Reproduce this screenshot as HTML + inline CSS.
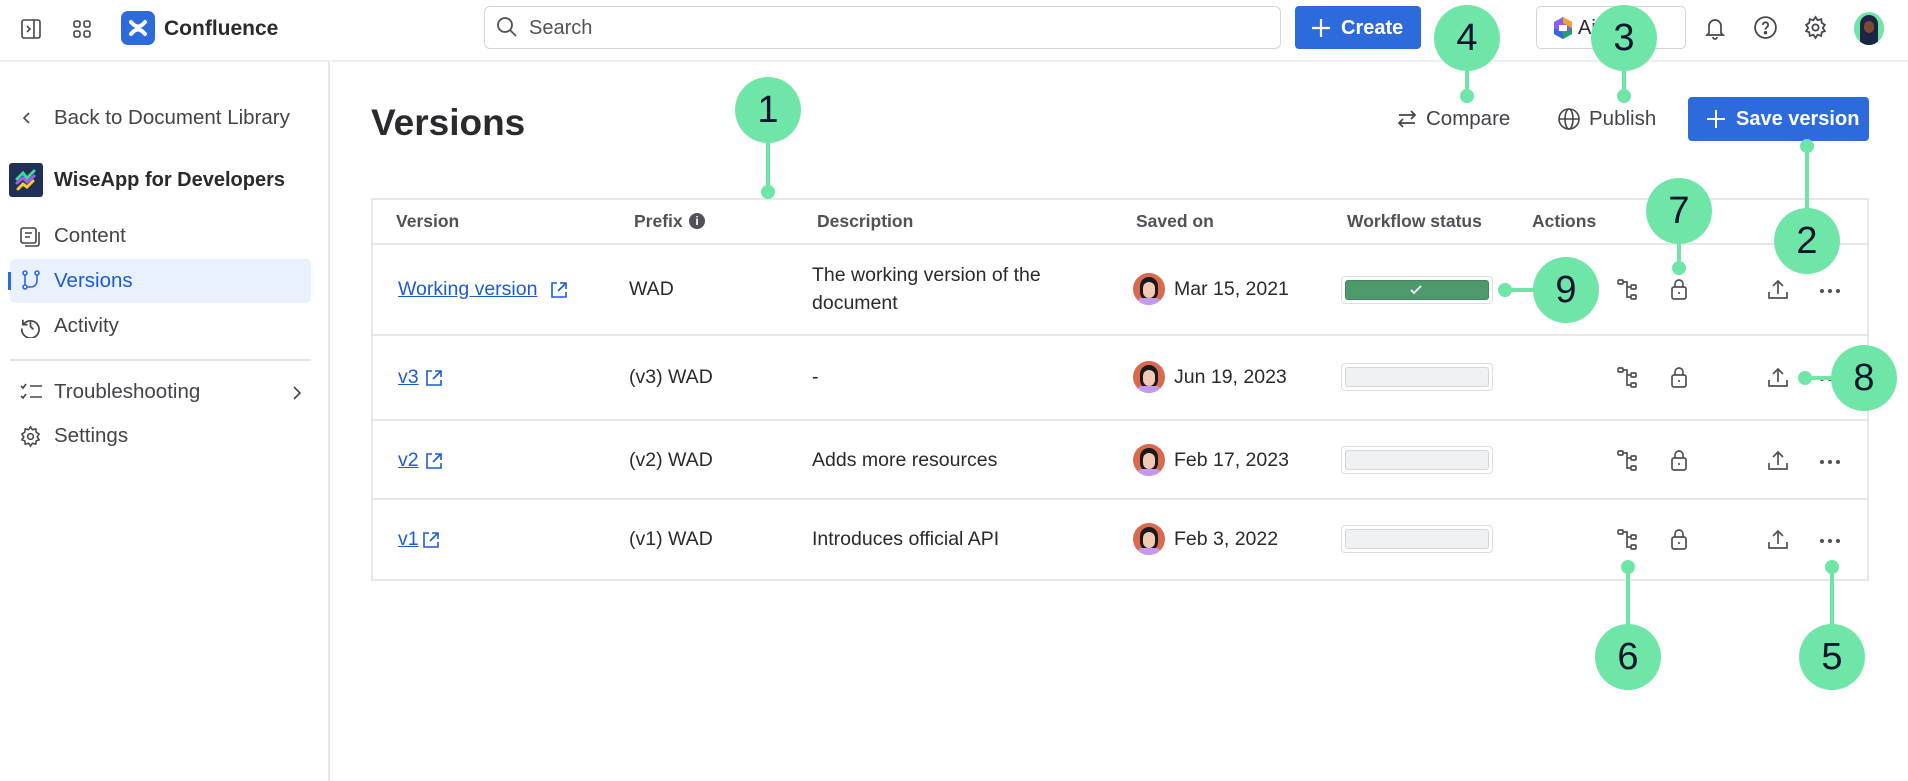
<!DOCTYPE html>
<html><head><meta charset="utf-8">
<style>
*{box-sizing:border-box;margin:0;padding:0}
body{width:1908px;height:781px;overflow:hidden;background:#fff;font-family:"Liberation Sans",sans-serif;color:#292A2E;position:relative}
.a{position:absolute}
.t{position:absolute;white-space:nowrap;line-height:1}
.nav{font-size:20.5px;color:#42444a}
.hd{font-size:17.5px;font-weight:bold;color:#505258}
.cell{font-size:19.5px;color:#292A2E}
.lnk{color:#1D5BD6;text-decoration:underline}
.bar{position:absolute;left:1341px;width:152px;height:28px;border:1px solid #dcdde0;border-radius:4px;padding:3px}
.bar div{width:100%;height:100%;background:#f0f1f2;border:1px solid #d5d6d9;border-radius:3px}
.row{position:absolute;left:371px;width:1498px;border-top:2px solid #e6e7e9}
.circ{position:absolute;width:66px;height:66px;border-radius:50%;background:#6fe6a8;color:#0a1630;font-size:38px;text-align:center;line-height:66px}
.dot{position:absolute;width:14px;height:14px;border-radius:50%;background:#6fe6a8}
.ln{position:absolute;background:#6fe6a8}
.av{position:absolute;width:32px;height:32px;border-radius:50%;background:#d9694f;overflow:hidden}
svg{position:absolute}
</style></head><body>
<div class="a" style="left:0;top:60px;width:1908px;height:2px;background:#eceef0"></div>
<svg style="left:19px;top:17px" width="24" height="24" viewBox="0 0 24 24" fill="none" stroke="#44464c" stroke-width="1.6"><rect x="3" y="3" width="18" height="18" rx="2"/><path d="M15 3v18M8 9l3 3-3 3"/></svg>
<svg style="left:70px;top:17px" width="24" height="24" viewBox="0 0 24 24" fill="none" stroke="#44464c" stroke-width="1.6"><rect x="4" y="4" width="6" height="6" rx="2"/><rect x="14" y="4" width="6" height="6" rx="2"/><rect x="4" y="14" width="6" height="6" rx="2"/><rect x="14" y="14" width="6" height="6" rx="2"/></svg>
<div class="a" style="left:121px;top:11px;width:34px;height:34px;border-radius:7px;background:#2d6bdc"></div>
<svg style="left:126px;top:16px" width="24" height="24" viewBox="0 0 24 24" fill="none" stroke="#fff" stroke-width="4" stroke-linecap="round"><path d="M5 6c5 6 9 6 14 0M5 18c5-6 9-6 14 0"/></svg>
<div class="t" style="left:164px;top:18px;font-size:21px;font-weight:bold;color:#292A2E">Confluence</div>
<div class="a" style="left:484px;top:6px;width:797px;height:43px;border:1.5px solid #d3d5d9;border-radius:6px"></div>
<svg style="left:496px;top:16px" width="22" height="22" viewBox="0 0 22 22" fill="none" stroke="#505258" stroke-width="1.8"><circle cx="9" cy="9" r="7"/><path d="M14 14l6 6"/></svg>
<div class="t" style="left:529px;top:18px;font-size:20px;color:#505258">Search</div>
<div class="a" style="left:1295px;top:6px;width:126px;height:43px;background:#2d6bdc;border-radius:4px"></div>
<svg style="left:1310px;top:17px" width="22" height="22" viewBox="0 0 22 22" stroke="#fff" stroke-width="2.2"><path d="M11 2v18M2 11h18"/></svg>
<div class="t" style="left:1341px;top:18px;font-size:20px;font-weight:bold;color:#fff">Create</div>
<div class="a" style="left:1536px;top:6px;width:150px;height:43px;border:1.5px solid #d3d5d9;border-radius:5px"></div>
<svg style="left:1553px;top:16px" width="20" height="24" viewBox="0 0 20 24"><path d="M10 1L19 6v12L10 23 1 18V6z" fill="#8b5cf6"/><path d="M10 1L19 6v6L10 7z" fill="#f5a524"/><path d="M1 12v6l9 5v-6z" fill="#2d6bdc"/><path d="M19 12v6l-9 5v-6z" fill="#22a06b"/><path d="M6 9h8v6H6z" fill="#fff"/></svg>
<div class="t" style="left:1578px;top:18px;font-size:20px;color:#292A2E">Ai&nbsp;&nbsp;&nbsp;&nbsp;&nbsp;&nbsp;&nbsp;vo</div>
<svg style="left:1703px;top:15px" width="24" height="26" viewBox="0 0 24 26" fill="none" stroke="#44464c" stroke-width="1.7"><path d="M6 18V11a6 6 0 0112 0v7l2 2H4zM10 22a2 2 0 004 0"/></svg>
<svg style="left:1753px;top:15px" width="25" height="25" viewBox="0 0 24 24" fill="none" stroke="#44464c" stroke-width="1.7"><circle cx="12" cy="12" r="10"/><path d="M9.5 9.5a2.5 2.5 0 114 2c-1 .7-1.5 1.2-1.5 2.5"/><circle cx="12" cy="17" r=".8" fill="#44464c"/></svg>
<svg style="left:1803px;top:15px" width="25" height="25" viewBox="0 0 24 24" fill="none" stroke="#44464c" stroke-width="1.7"><circle cx="12" cy="12" r="3"/><path d="M12 2l2 3 3.5-1 .5 3.5 3 2-2 3 2 3-3 1-.5 3.5-3.5-1-2 3-2-3-3.5 1-.5-3.5-3-1 2-3-2-3 3-2 .5-3.5 3.5 1z"/></svg>
<div class="a" style="left:1854px;top:12px;width:30px;height:33px;border-radius:50%;background:#6fe6a8;overflow:hidden"><div class="a" style="left:6px;top:3px;width:18px;height:30px;border-radius:9px 9px 4px 4px;background:#1c2541"></div><div class="a" style="left:10px;top:9px;width:10px;height:12px;border-radius:5px;background:#7a4a32"></div></div>

<div class="a" style="left:328px;top:62px;width:1.5px;height:719px;background:#e6e7e9"></div>
<svg style="left:19px;top:110px" width="16" height="16" viewBox="0 0 16 16" fill="none" stroke="#44464c" stroke-width="1.6"><path d="M10 3L5 8l5 5"/></svg>
<div class="t nav" style="left:54px;top:108px">Back to Document Library</div>
<div class="a" style="left:9px;top:163px;width:34px;height:34px;border-radius:3px;background:#1f2f55"></div>
<svg style="left:12px;top:166px" width="28" height="28" viewBox="0 0 28 28" fill="none" stroke-width="3" stroke-linecap="round"><path d="M5 13l6-6 4 5 7-7" stroke="#3ddc97"/><path d="M5 17l6-5 4 4 7-6" stroke="#a65cf0"/><path d="M6 23l5-5 4 3 6-6" stroke="#f5cd2f"/></svg>
<div class="t" style="left:54px;top:170px;font-size:20px;font-weight:bold;color:#292A2E">WiseApp for Developers</div>
<svg style="left:19px;top:226px" width="22" height="22" viewBox="0 0 22 22" fill="none" stroke="#44464c" stroke-width="1.6"><rect x="2" y="2" width="15" height="15" rx="2"/><path d="M6 7h7M6 11h5M20 6v12a2 2 0 01-2 2H6"/></svg>
<div class="t nav" style="left:54px;top:226px">Content</div>
<div class="a" style="left:10px;top:259px;width:301px;height:44px;background:#e9f0fe;border-radius:5px"></div>
<div class="a" style="left:8px;top:272px;width:3px;height:18px;background:#2d6bdc"></div>
<svg style="left:20px;top:269px" width="22" height="22" viewBox="0 0 22 22" fill="none" stroke="#2d6bdc" stroke-width="1.6"><circle cx="5" cy="4" r="2"/><circle cx="17" cy="4" r="2"/><circle cx="5" cy="18" r="2"/><path d="M5 6v10M17 6v6a6 6 0 01-6 6H7"/></svg>
<div class="t" style="left:54px;top:271px;font-size:20.5px;color:#1D5BD6">Versions</div>
<svg style="left:19px;top:315px" width="23" height="23" viewBox="0 0 24 24" fill="none" stroke="#44464c" stroke-width="1.8"><path d="M4 5v5h5"/><path d="M4.5 10A9 9 0 113 14"/><path d="M12 7v5l3 3"/></svg>
<div class="t nav" style="left:54px;top:316px">Activity</div>
<div class="a" style="left:10px;top:359px;width:301px;height:1.5px;background:#e3e4e6"></div>
<svg style="left:19px;top:381px" width="24" height="22" viewBox="0 0 24 22" fill="none" stroke="#44464c" stroke-width="1.6"><path d="M2 5l2 2 3-4M2 15l2 2 3-4M11 5h12M11 16h12"/></svg>
<div class="t nav" style="left:54px;top:382px">Troubleshooting</div>
<svg style="left:290px;top:385px" width="14" height="16" viewBox="0 0 14 16" fill="none" stroke="#44464c" stroke-width="1.6"><path d="M4 2l6 6-6 6"/></svg>
<svg style="left:19px;top:425px" width="23" height="23" viewBox="0 0 24 24" fill="none" stroke="#44464c" stroke-width="1.6"><circle cx="12" cy="12" r="3"/><path d="M12 2l2 3 3.5-1 .5 3.5 3 2-2 3 2 3-3 1-.5 3.5-3.5-1-2 3-2-3-3.5 1-.5-3.5-3-1 2-3-2-3 3-2 .5-3.5 3.5 1z"/></svg>
<div class="t nav" style="left:54px;top:426px">Settings</div>

<div class="t" style="left:371px;top:104px;font-size:37px;font-weight:bold;color:#292A2E">Versions</div>
<svg style="left:1396px;top:108px" width="22" height="22" viewBox="0 0 22 22" fill="none" stroke="#44464c" stroke-width="1.7"><path d="M3 7h16M15 3l4 4-4 4M19 15H3M7 11l-4 4 4 4"/></svg>
<div class="t" style="left:1426px;top:109px;font-size:20.5px;color:#42444a">Compare</div>
<svg style="left:1557px;top:107px" width="24" height="24" viewBox="0 0 24 24" fill="none" stroke="#44464c" stroke-width="1.6"><circle cx="12" cy="12" r="10"/><ellipse cx="12" cy="12" rx="4" ry="10"/><path d="M2 12h20"/></svg>
<div class="t" style="left:1589px;top:109px;font-size:20.5px;color:#42444a">Publish</div>
<div class="a" style="left:1688px;top:97px;width:181px;height:44px;background:#2d6bdc;border-radius:4px"></div>
<svg style="left:1705px;top:108px" width="22" height="22" viewBox="0 0 22 22" stroke="#fff" stroke-width="2"><path d="M11 2v18M2 11h18"/></svg>
<div class="t" style="left:1736px;top:109px;font-size:20px;font-weight:bold;color:#fff">Save version</div>

<div class="a" style="left:371px;top:198px;width:1498px;height:383px;border:2px solid #e6e7e9"></div>
<div class="t hd" style="left:396px;top:213px">Version</div>
<div class="t hd" style="left:634px;top:213px">Prefix</div>
<div class="a" style="left:689px;top:213px;width:16px;height:16px;border-radius:50%;background:#505258;color:#fff;font-size:12px;font-weight:bold;text-align:center;line-height:16px">i</div>
<div class="t hd" style="left:817px;top:213px">Description</div>
<div class="t hd" style="left:1136px;top:213px">Saved on</div>
<div class="t hd" style="left:1347px;top:213px">Workflow status</div>
<div class="t hd" style="left:1532px;top:213px">Actions</div>
<div class="row" style="top:243px"></div>
<div class="row" style="top:334px"></div>
<div class="row" style="top:419px"></div>
<div class="row" style="top:498px"></div>

<div class="t cell lnk" style="left:398px;top:280px">Working version</div>
<div class="t cell" style="left:629px;top:280px">WAD</div>
<div class="t cell" style="left:812px;top:266px">The working version of the</div>
<div class="t cell" style="left:812px;top:294px">document</div>
<div class="t cell lnk" style="left:398px;top:368px">v3</div>
<div class="t cell" style="left:629px;top:368px">(v3) WAD</div>
<div class="t cell" style="left:812px;top:368px">-</div>
<div class="t cell lnk" style="left:398px;top:451px">v2</div>
<div class="t cell" style="left:629px;top:451px">(v2) WAD</div>
<div class="t cell" style="left:812px;top:451px">Adds more resources</div>
<div class="t cell lnk" style="left:398px;top:530px">v1</div>
<div class="t cell" style="left:629px;top:530px">(v1) WAD</div>
<div class="t cell" style="left:812px;top:530px">Introduces official API</div>

<svg style="left:550px;top:281px" width="18" height="18" viewBox="0 0 18 18" fill="none" stroke="#1D5BD6" stroke-width="1.6"><path d="M7 2H2v14h14v-5M10 2h6v6M16 2L8 10"/></svg>
<svg style="left:425px;top:369px" width="18" height="18" viewBox="0 0 18 18" fill="none" stroke="#1D5BD6" stroke-width="1.6"><path d="M7 2H2v14h14v-5M10 2h6v6M16 2L8 10"/></svg>
<svg style="left:425px;top:452px" width="18" height="18" viewBox="0 0 18 18" fill="none" stroke="#1D5BD6" stroke-width="1.6"><path d="M7 2H2v14h14v-5M10 2h6v6M16 2L8 10"/></svg>
<svg style="left:422px;top:531px" width="18" height="18" viewBox="0 0 18 18" fill="none" stroke="#1D5BD6" stroke-width="1.6"><path d="M7 2H2v14h14v-5M10 2h6v6M16 2L8 10"/></svg>

<div class="av" style="left:1133px;top:273px"><div class="a" style="left:7px;top:4px;width:18px;height:24px;border-radius:9px;background:#1a1a1a"></div><div class="a" style="left:10px;top:9px;width:12px;height:16px;border-radius:6px;background:#f3c9b4"></div><div class="a" style="left:4px;top:25px;width:24px;height:10px;border-radius:6px;background:#c39af0"></div></div>
<div class="t cell" style="left:1174px;top:280px">Mar 15, 2021</div>
<div class="av" style="left:1133px;top:361px"><div class="a" style="left:7px;top:4px;width:18px;height:24px;border-radius:9px;background:#1a1a1a"></div><div class="a" style="left:10px;top:9px;width:12px;height:16px;border-radius:6px;background:#f3c9b4"></div><div class="a" style="left:4px;top:25px;width:24px;height:10px;border-radius:6px;background:#c39af0"></div></div>
<div class="t cell" style="left:1174px;top:368px">Jun 19, 2023</div>
<div class="av" style="left:1133px;top:444px"><div class="a" style="left:7px;top:4px;width:18px;height:24px;border-radius:9px;background:#1a1a1a"></div><div class="a" style="left:10px;top:9px;width:12px;height:16px;border-radius:6px;background:#f3c9b4"></div><div class="a" style="left:4px;top:25px;width:24px;height:10px;border-radius:6px;background:#c39af0"></div></div>
<div class="t cell" style="left:1174px;top:451px">Feb 17, 2023</div>
<div class="av" style="left:1133px;top:523px"><div class="a" style="left:7px;top:4px;width:18px;height:24px;border-radius:9px;background:#1a1a1a"></div><div class="a" style="left:10px;top:9px;width:12px;height:16px;border-radius:6px;background:#f3c9b4"></div><div class="a" style="left:4px;top:25px;width:24px;height:10px;border-radius:6px;background:#c39af0"></div></div>
<div class="t cell" style="left:1174px;top:530px">Feb 3, 2022</div>

<div class="bar" style="top:276px"><div style="background:#4c9a6c;border-color:#3f8a5d"></div></div>
<svg style="left:1408px;top:283px" width="16" height="14" viewBox="0 0 16 14" fill="none" stroke="#fff" stroke-width="1.8"><path d="M3 7l3 3 7-7"/></svg>
<div class="bar" style="top:363px"><div></div></div>
<div class="bar" style="top:446px"><div></div></div>
<div class="bar" style="top:525px"><div></div></div>

<svg width="0" height="0"><defs>
<g id="tree" fill="none" stroke="#505258" stroke-width="1.7"><rect x="1" y="1" width="5" height="4" rx="1"/><rect x="14" y="6" width="5" height="4" rx="1"/><rect x="14" y="16" width="5" height="4" rx="1"/><path d="M6 3h4v15h4M10 8h4"/></g>
<g id="lock" fill="none" stroke="#505258" stroke-width="1.7"><rect x="2" y="9" width="14" height="12" rx="2"/><path d="M5 9V6a4 4 0 018 0v3M9 14v2"/></g>
<g id="up" fill="none" stroke="#505258" stroke-width="1.7"><path d="M2 13v6h18v-6M11 15V2M6 7l5-5 5 5"/></g>
<g id="dots" fill="#505258"><circle cx="3" cy="4" r="2"/><circle cx="11" cy="4" r="2"/><circle cx="19" cy="4" r="2"/></g>
</defs></svg>
<svg style="left:1617px;top:279px" width="22" height="22"><use href="#tree"/></svg>
<svg style="left:1670px;top:278px" width="18" height="23"><use href="#lock"/></svg>
<svg style="left:1767px;top:279px" width="22" height="22"><use href="#up"/></svg>
<svg style="left:1819px;top:287px" width="24" height="8"><use href="#dots"/></svg>

<svg style="left:1617px;top:367px" width="22" height="22"><use href="#tree"/></svg>
<svg style="left:1670px;top:366px" width="18" height="23"><use href="#lock"/></svg>
<svg style="left:1767px;top:367px" width="22" height="22"><use href="#up"/></svg>
<svg style="left:1819px;top:375px" width="24" height="8"><use href="#dots"/></svg>

<svg style="left:1617px;top:450px" width="22" height="22"><use href="#tree"/></svg>
<svg style="left:1670px;top:449px" width="18" height="23"><use href="#lock"/></svg>
<svg style="left:1767px;top:450px" width="22" height="22"><use href="#up"/></svg>
<svg style="left:1819px;top:458px" width="24" height="8"><use href="#dots"/></svg>

<svg style="left:1617px;top:529px" width="22" height="22"><use href="#tree"/></svg>
<svg style="left:1670px;top:528px" width="18" height="23"><use href="#lock"/></svg>
<svg style="left:1767px;top:529px" width="22" height="22"><use href="#up"/></svg>
<svg style="left:1819px;top:537px" width="24" height="8"><use href="#dots"/></svg>

<div class="ln" style="left:766px;top:130px;width:4px;height:62px"></div><div class="dot" style="left:761px;top:185px"></div><div class="circ" style="left:735px;top:77px">1</div>
<div class="ln" style="left:1465px;top:55px;width:4px;height:40px"></div><div class="dot" style="left:1460px;top:89px"></div><div class="circ" style="left:1434px;top:5px">4</div>
<div class="ln" style="left:1622px;top:55px;width:4px;height:40px"></div><div class="dot" style="left:1617px;top:89px"></div><div class="circ" style="left:1591px;top:5px">3</div>
<div class="ln" style="left:1805px;top:146px;width:4px;height:70px"></div><div class="dot" style="left:1800px;top:139px"></div><div class="circ" style="left:1774px;top:208px">2</div>
<div class="ln" style="left:1677px;top:230px;width:4px;height:38px"></div><div class="dot" style="left:1672px;top:261px"></div><div class="circ" style="left:1646px;top:178px">7</div>
<div class="ln" style="left:1505px;top:288px;width:40px;height:4px"></div><div class="dot" style="left:1498px;top:283px"></div><div class="circ" style="left:1533px;top:257px">9</div>
<div class="ln" style="left:1805px;top:376px;width:40px;height:4px"></div><div class="dot" style="left:1798px;top:371px"></div><div class="circ" style="left:1831px;top:345px">8</div>
<div class="ln" style="left:1626px;top:567px;width:4px;height:70px"></div><div class="dot" style="left:1621px;top:560px"></div><div class="circ" style="left:1595px;top:624px">6</div>
<div class="ln" style="left:1830px;top:567px;width:4px;height:70px"></div><div class="dot" style="left:1825px;top:560px"></div><div class="circ" style="left:1799px;top:624px">5</div>
</body></html>
